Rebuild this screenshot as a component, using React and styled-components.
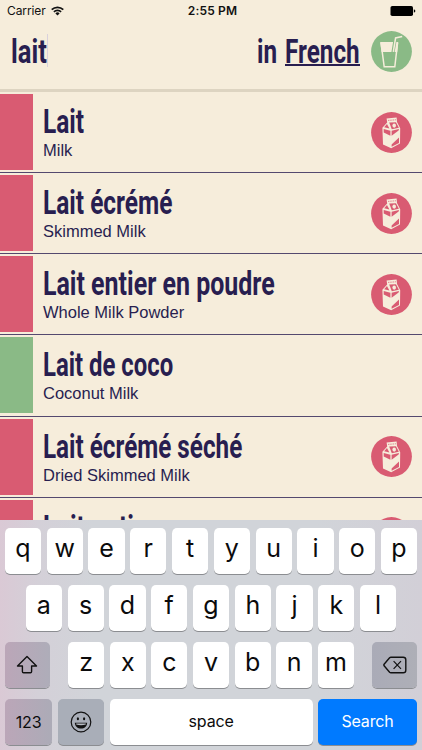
// App.jsx
import React, { useLayoutEffect, useRef, useState } from 'react';
import styled, { createGlobalStyle } from 'styled-components';

const GlobalStyle = createGlobalStyle`
  * {
    box-sizing: border-box;
  }
  body {
    margin: 0;
    background: #f6eddb;
  }
`;

const NAVY = '#281e50';
const CREAM = '#f6eddb';
const PINK = '#d95b72';
const GREEN = '#8aba86';

const Screen = styled.div`
  width: 422px;
  height: 750px;
  display: flex;
  flex-direction: column;
  overflow: hidden;
  background: ${CREAM};
  color: ${NAVY};
  font-family: 'Liberation Sans', Arial, sans-serif;
`;

const StatusBar = styled.div`
  flex: none;
  height: 22px;
  padding: 0 6px 0 7px;
  display: grid;
  grid-template-columns: 1fr auto 1fr;
  align-items: center;
  color: #111;
  font-family: Inter, sans-serif;
  font-size: 12px;
  line-height: 22px;
`;

const Carrier = styled.div`
  display: flex;
  align-items: center;
  gap: 5px;
  letter-spacing: -0.1px;
`;

const Clock = styled.div`
  padding-left: 2px;
  font-weight: 600;
  letter-spacing: 0.15px;
`;

const Battery = styled.svg`
  justify-self: end;
`;

const Header = styled.div`
  flex: none;
  height: 70px;
  padding: 0 10.5px 0 11px;
  display: flex;
  align-items: flex-start;
  border-bottom: 3px solid #ddd4c1;
`;

const SearchField = styled.div`
  flex: 1;
  display: flex;
  padding-top: 9px;
`;

const Caret = styled.div`
  width: 1px;
  height: 33px;
  margin-top: 3px;
  background: #d9d1dc;
`;

const Language = styled.div`
  display: flex;
  gap: 8px;
  padding-top: 9px;
  margin-right: 11px;
`;

const Underlined = styled.div`
  height: 35px;
  border-bottom: 2px solid ${NAVY};
`;

const HeaderIcon = styled.div`
  height: 41px;
  padding-top: 9px;
`;

const List = styled.div`
  flex: none;
  height: 427.5px;
  overflow: hidden;
`;

const Row = styled.div`
  height: 81.15px;
  padding: 2px 10.5px 2px 0;
  display: flex;
  border-bottom: 1px solid #54496e;
`;

const Swatch = styled.div`
  flex: none;
  width: 33px;
  height: 76px;
  background: ${({ $color }) => $color};
`;

const Names = styled.div`
  flex: 1;
  padding: 7px 0 0 10px;
`;

const Translation = styled.div`
  margin-top: -1px;
  font-size: 16.5px;
  line-height: 20px;
  white-space: nowrap;
`;

const RowIcon = styled.div`
  align-self: center;
  height: 41px;
`;

const CondensedBox = styled.div`
  height: 40px;
  white-space: nowrap;
`;

const CondensedText = styled.span`
  display: inline-block;
  transform-origin: 0 0;
  font-family: Roboto, sans-serif;
  font-weight: 700;
  font-size: 34px;
  line-height: 40px;
`;

const Keyboard = styled.div`
  flex: none;
  height: 231px;
  padding: 8.5px 4.5px 0;
  display: flex;
  flex-direction: column;
  gap: 11px;
  font-family: Inter, sans-serif;
  color: #0b0b0c;
  background: linear-gradient(90deg, #dac9d5 0%, #d4d0d8 9%, #d1d4d9 22%, #d1d4d9 75%, #d2cfd7 100%);
`;

const KeyRow = styled.div`
  height: 46px;
  display: flex;
  justify-content: center;
  gap: 5.6px;
`;

const Key = styled.div`
  width: ${({ $width }) => $width || 36.2}px;
  height: 46px;
  padding-bottom: 6px;
  display: flex;
  align-items: center;
  justify-content: center;
  border-radius: 5px;
  background: #fff;
  box-shadow: 0 1px 0 #8b8d91;
  font-size: 25px;
  font-weight: 400;
  line-height: 30px;
`;

const ActionKey = styled(Key)`
  padding-bottom: ${({ $lift }) => $lift || 0}px;
  margin-left: ${({ $before }) => $before || 0}px;
  margin-right: ${({ $after }) => $after || 0}px;
  background: ${({ $background }) => $background || '#fff'};
  color: ${({ $color }) => $color || 'inherit'};
  font-size: 16px;
  line-height: 20px;
  letter-spacing: -0.15px;
`;

// Squeezes the text horizontally until it is as wide as asked
function Condensed({ width, children }) {
  const textRef = useRef(null);
  const [scale, setScale] = useState(0.7);

  useLayoutEffect(() => {
    setScale(width / textRef.current.offsetWidth);
  }, [width, children]);

  return (
    <CondensedBox style={{ width }}>
      <CondensedText ref={textRef} style={{ transform: `scaleX(${scale})` }}>
        {children}
      </CondensedText>
    </CondensedBox>
  );
}

function MilkIcon() {
  return (
    <svg width="41" height="41" viewBox="0 0 41 41" display="block">
      <circle cx="20.5" cy="20.5" r="20.4" fill={PINK} />
      <path
        d="M15.6 6.4 L25.6 5.6 L26 10 L29.2 16.2 L29 31.5 L20.2 36.2 L12 32.6 L11.4 15.8 L16.2 10.4 Z"
        fill={CREAM}
      />
      <path d="M18.2 10.6 L25 10.2 L27.9 15.8 L20.8 17.2 Z" fill={PINK} />
      <path d="M16 12 L18.4 16.4 L13.2 15.3 Z" fill={PINK} />
      <ellipse cx="23.2" cy="13.6" rx="1.8" ry="2.1" fill={CREAM} />
      <path d="M12.7 17 L19.4 18.7 L19.4 23.8 L12.7 20.5 Z" fill={PINK} />
      <path d="M20.6 18.8 L28 17.1 L27.6 18.6 L20.6 23.8 Z" fill={PINK} />
      <path d="M20.6 32.4 L28 25.4 L28 30.9 L20.6 34.8 Z" fill={PINK} />
      <path d="M17.2 8.4 L24.8 7.8" stroke={PINK} strokeWidth="0.9" strokeDasharray="1.2 1" />
    </svg>
  );
}

function DrinkIcon() {
  return (
    <svg width="41" height="41" viewBox="0 0 41 41" fill="none" display="block">
      <circle cx="20.5" cy="20.5" r="20.4" fill={GREEN} />
      <path d="M9.2 11 H27.2 L26.2 21 H10.6 Z" fill={CREAM} />
      <path d="M10 11.6 L13.2 35.8 H23.8 L26.6 11.6" stroke={CREAM} strokeWidth="1.5" />
      <path d="M22 21.2 L24.4 7 L27 6.2" stroke={GREEN} strokeWidth="3.2" />
      <path d="M22.3 20.8 L24.6 6.9 L31.2 5.5" stroke={CREAM} strokeWidth="1.5" />
    </svg>
  );
}

function WifiIcon() {
  return (
    <svg width="13" height="10" viewBox="0 0 13 10" fill="none" stroke="#111" strokeWidth="1.7">
      <path d="M0.7 3.7 A8.2 8.2 0 0 1 12.3 3.7" />
      <path d="M2.9 5.9 A5.1 5.1 0 0 1 10.1 5.9" />
      <path d="M6.5 9.6 L4.4 7.4 A3 3 0 0 1 8.6 7.4 Z" fill="#111" stroke="none" />
    </svg>
  );
}

function ShiftIcon() {
  return (
    <svg width="22" height="20" viewBox="0 0 22 20" fill="none" stroke="#111" strokeWidth="1.4" strokeLinejoin="round">
      <path d="M11 1.5 L20.5 11 H15.6 V16.6 Q15.6 17.8 14.4 17.8 H7.6 Q6.4 17.8 6.4 16.6 V11 H1.5 Z" />
    </svg>
  );
}

function EmojiIcon() {
  return (
    <svg width="22" height="22" viewBox="0 0 22 22" fill="none">
      <circle cx="11" cy="11" r="9.8" stroke="#111" strokeWidth="1.2" />
      <ellipse cx="7.9" cy="7.8" rx="1.1" ry="1.5" fill="#111" />
      <ellipse cx="14.1" cy="7.8" rx="1.1" ry="1.5" fill="#111" />
      <path d="M4.8 11.7 H17.2 C16.9 15.4 14.5 17.6 11 17.6 C7.5 17.6 5.1 15.4 4.8 11.7 Z" fill="#111" />
      <path d="M6.2 12.6 H15.8 V13.6 Q11 14.8 6.2 13.6 Z" fill="#b9bdc5" />
    </svg>
  );
}

function DeleteIcon() {
  return (
    <svg width="24" height="18" viewBox="0 0 24 18" fill="none" stroke="#111" strokeWidth="1.4" strokeLinejoin="round">
      <path d="M8 1.2 H20.2 Q22.8 1.2 22.8 3.8 V14.2 Q22.8 16.8 20.2 16.8 H8 Q7.2 16.8 6.6 16.2 L1.1 9.8 Q0.6 9 1.1 8.2 L6.6 1.8 Q7.2 1.2 8 1.2 Z" />
      <path d="M10.6 5.2 L18 12.8 M18 5.2 L10.6 12.8" strokeWidth="1.2" />
    </svg>
  );
}

const foods = [
  { name: 'Lait', width: 41, english: 'Milk', dairy: true },
  { name: 'Lait écrémé', width: 129.5, english: 'Skimmed Milk', dairy: true },
  { name: 'Lait entier en poudre', width: 232, english: 'Whole Milk Powder', dairy: true },
  { name: 'Lait de coco', width: 130, english: 'Coconut Milk', dairy: false },
  { name: 'Lait écrémé séché', width: 199, english: 'Dried Skimmed Milk', dairy: true },
  { name: 'Lait entier', width: 113.5, english: '', dairy: true },
];

function App() {
  return (
    <>
      <GlobalStyle />
      <Screen>
        <StatusBar>
          <Carrier>
            Carrier
            <WifiIcon />
          </Carrier>
          <Clock>2:55 PM</Clock>
          <Battery width="26" height="10" viewBox="0 0 26 10">
            <rect x="0.5" y="0" width="22.5" height="10" rx="1.8" fill="#000" />
            <path d="M23.8 3.3 Q25.4 4 25.4 5 Q25.4 6 23.8 6.7 Z" fill="#000" />
          </Battery>
        </StatusBar>

        <Header>
          <SearchField>
            <Condensed width={36}>lait</Condensed>
            <Caret />
          </SearchField>
          <Language>
            <Condensed width={20}>in</Condensed>
            <Underlined>
              <Condensed width={75}>French</Condensed>
            </Underlined>
          </Language>
          <HeaderIcon>
            <DrinkIcon />
          </HeaderIcon>
        </Header>

        <List>
          {foods.map((food) => (
            <Row key={food.name}>
              <Swatch $color={food.dairy ? PINK : GREEN} />
              <Names>
                <Condensed width={food.width}>{food.name}</Condensed>
                <Translation>{food.english}</Translation>
              </Names>
              {food.dairy && (
                <RowIcon>
                  <MilkIcon />
                </RowIcon>
              )}
            </Row>
          ))}
        </List>

        <Keyboard>
          <KeyRow>
            {[...'qwertyuiop'].map((letter) => (
              <Key key={letter}>{letter}</Key>
            ))}
          </KeyRow>
          <KeyRow>
            {[...'asdfghjkl'].map((letter) => (
              <Key key={letter}>{letter}</Key>
            ))}
          </KeyRow>
          <KeyRow>
            <ActionKey $width={45.6} $after={12.6} $background="linear-gradient(90deg, #bba6b8, #aeadb9)">
              <ShiftIcon />
            </ActionKey>
            {[...'zxcvbnm'].map((letter) => (
              <Key key={letter}>{letter}</Key>
            ))}
            <ActionKey $width={45.6} $before={12.6} $background="linear-gradient(90deg, #aaabb7, #aeafb7)">
              <DeleteIcon />
            </ActionKey>
          </KeyRow>
          <KeyRow>
            <ActionKey $width={46.8} $background="linear-gradient(90deg, #bba6b8, #acabb7)">
              123
            </ActionKey>
            <ActionKey $width={46.4} $background="#a9aeb8">
              <EmojiIcon />
            </ActionKey>
            <ActionKey $width={203} $lift={2}>
              space
            </ActionKey>
            <ActionKey $width={98.6} $lift={2} $background="#007aff" $color="#fff">
              Search
            </ActionKey>
          </KeyRow>
        </Keyboard>
      </Screen>
    </>
  );
}

export default App;
